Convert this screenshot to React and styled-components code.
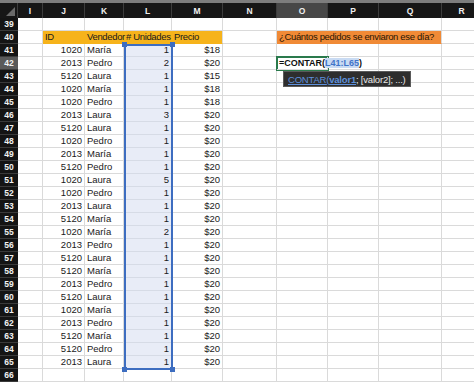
import React from "react";
import styled, { createGlobalStyle } from "styled-components";

const GlobalStyle = createGlobalStyle`
  html, body {
    margin: 0;
    padding: 0;
    background: #ffffff;
  }
`;

const COLS = [
  { key: "I", w: 25 },
  { key: "J", w: 42 },
  { key: "K", w: 39 },
  { key: "L", w: 48 },
  { key: "M", w: 51 },
  { key: "N", w: 54 },
  { key: "O", w: 51 },
  { key: "P", w: 51 },
  { key: "Q", w: 63 },
  { key: "R", w: 40 },
];

const DATA = [
  [1020, "María", 1, 18],
  [2013, "Pedro", 2, 20],
  [5120, "Laura", 1, 15],
  [1020, "María", 1, 18],
  [1020, "Pedro", 1, 18],
  [2013, "Laura", 3, 20],
  [5120, "Laura", 1, 20],
  [1020, "Pedro", 1, 20],
  [2013, "María", 1, 20],
  [5120, "Pedro", 1, 20],
  [1020, "Laura", 5, 20],
  [1020, "Pedro", 1, 20],
  [2013, "Laura", 1, 20],
  [5120, "María", 1, 20],
  [1020, "María", 2, 20],
  [2013, "Pedro", 1, 20],
  [5120, "Laura", 1, 20],
  [5120, "María", 1, 20],
  [2013, "Pedro", 1, 20],
  [5120, "Laura", 1, 20],
  [1020, "María", 1, 20],
  [2013, "Pedro", 1, 20],
  [5120, "María", 1, 20],
  [5120, "Pedro", 1, 20],
  [2013, "Laura", 1, 20],
];

const Sheet = styled.div`
  position: relative;
  width: 474px;
  height: 384px;
  overflow: hidden;
  background: #ffffff;
  font-family: "Liberation Sans", Arial, sans-serif;
`;

const HeaderRow = styled.div`
  display: flex;
  height: 18px;
  box-sizing: border-box;
  border-top: 3px solid #7d7d7d;
  background: #161616;
`;

const Corner = styled.div`
  position: relative;
  flex: none;
  width: 18px;
  box-sizing: border-box;
  border-right: 1px solid #3c3c3c;

  &::after {
    content: "";
    position: absolute;
    right: 2px;
    bottom: 2px;
    width: 0;
    height: 0;
    border-left: 9px solid transparent;
    border-bottom: 9px solid #6a6a6a;
  }
`;

const ColHead = styled.div`
  flex: none;
  width: ${(p) => p.$w}px;
  box-sizing: border-box;
  display: flex;
  align-items: center;
  justify-content: center;
  border-right: 1px solid #3c3c3c;
  background: ${(p) => (p.$active ? "#474747" : "transparent")};
  color: #f0f0f0;
  font-size: 8.5px;
  font-weight: bold;
`;

const Row = styled.div`
  display: flex;
  height: 13px;
`;

const RowHead = styled.div`
  flex: none;
  width: 18px;
  box-sizing: border-box;
  display: flex;
  align-items: center;
  justify-content: center;
  background: ${(p) => (p.$active ? "#5a5a5a" : "#141414")};
  border-bottom: 1px solid #3a3a3a;
  color: #f2f2f2;
  font-size: 8.5px;
  font-weight: bold;
`;

const Cell = styled.div`
  position: relative;
  flex: none;
  width: ${(p) => p.$w}px;
  box-sizing: border-box;
  padding: 0 2px;
  border-right: 1px solid ${(p) => (p.$noRight ? "transparent" : "#dadada")};
  border-bottom: 1px solid ${(p) => (p.$fill ? p.$fill : "#dadada")};
  background: ${(p) => p.$fill || "transparent"};
  color: ${(p) => p.$color || "#1a1a1a"};
  font-size: 9.5px;
  letter-spacing: ${(p) => (p.$tight ? "-0.35px" : "0")};
  line-height: 12px;
  text-align: ${(p) => (p.$right ? "right" : "left")};
  white-space: nowrap;
  z-index: ${(p) => (p.$front ? 2 : "auto")};
`;

const SelCell = styled(Cell)`
  background: #e8ecf7;
  border-bottom-color: #d6dbe6;
`;

const Formula = styled.span`
  font-size: 9px;
  font-weight: bold;
  color: #111111;
`;

const RefText = styled.span`
  color: #3f74c9;
  background: #c9dbf3;
`;

const ActiveBox = styled.div`
  position: absolute;
  left: 276px;
  top: 56px;
  width: 53px;
  height: 15px;
  box-sizing: border-box;
  border: 2px solid #2a7a4c;
  pointer-events: none;
  z-index: 1;
`;

const Selection = styled.div`
  position: absolute;
  left: 124px;
  top: 44px;
  width: 49px;
  height: 326px;
  box-sizing: border-box;
  border: 2px solid #3d6dc0;
  pointer-events: none;
  z-index: 3;
`;

const Handle = styled.span`
  position: absolute;
  width: 5px;
  height: 5px;
  background: #3d6dc0;
  ${(p) => (p.$top ? "top: -4px;" : "bottom: -4px;")}
  ${(p) => (p.$left ? "left: -4px;" : "right: -4px;")}
`;

const Tooltip = styled.div`
  position: absolute;
  left: 283px;
  top: 71px;
  height: 16px;
  box-sizing: border-box;
  padding: 0 4px;
  display: flex;
  align-items: center;
  background: #2e2e2e;
  border: 1px solid #5a5a5a;
  color: #e8e8e8;
  font-size: 9.5px;
  letter-spacing: -0.2px;
  white-space: nowrap;
  z-index: 4;
`;

const FnLink = styled.span`
  color: #5d90dc;
  text-decoration: underline;
  font-weight: ${(p) => (p.$bold ? "bold" : "normal")};
`;

const ORANGE_HEAD = "#f6b31b";
const ORANGE_Q = "#f08a36";

const dataRow = (r, i) => {
  const n = 41 + i;
  const [id, name, qty, price] = r;
  return (
    <Row key={n}>
      <RowHead $active={n === 42}>{n}</RowHead>
      <Cell $w={25} />
      <Cell $w={42} $right>{id}</Cell>
      <Cell $w={39}>{name}</Cell>
      <SelCell $w={48} $right>{qty}</SelCell>
      <Cell $w={51} $right>${price}</Cell>
      <Cell $w={54} />
      {n === 42 ? (
        <Cell $w={51} $front>
          <Formula>
            =CONTAR(<RefText>L41:L65</RefText>)
          </Formula>
        </Cell>
      ) : (
        <Cell $w={51} />
      )}
      <Cell $w={51} />
      <Cell $w={63} />
      <Cell $w={40} />
    </Row>
  );
};

const blankRow = (n) => (
  <Row key={n}>
    <RowHead>{n}</RowHead>
    {COLS.map((c) => (
      <Cell key={c.key} $w={c.w} />
    ))}
  </Row>
);

export default function App() {
  return (
    <>
      <GlobalStyle />
      <Sheet>
        <HeaderRow>
          <Corner />
          {COLS.map((c) => (
            <ColHead key={c.key} $w={c.w} $active={c.key === "O"}>
              {c.key}
            </ColHead>
          ))}
        </HeaderRow>

        {blankRow(39)}

        <Row>
          <RowHead>40</RowHead>
          <Cell $w={25} />
          <Cell $w={42} $fill={ORANGE_HEAD} $noRight $tight>ID</Cell>
          <Cell $w={39} $fill={ORANGE_HEAD} $noRight $tight $front>
            Vendedor
          </Cell>
          <Cell $w={48} $fill={ORANGE_HEAD} $noRight $tight>
            # Unidades
          </Cell>
          <Cell $w={51} $fill={ORANGE_HEAD} $tight>Precio</Cell>
          <Cell $w={54} />
          <Cell $w={165} $fill={ORANGE_Q} $color="#2a1604" $tight>
            ¿Cuántos pedidos se enviaron ese día?
          </Cell>
          <Cell $w={40} />
        </Row>

        {DATA.map(dataRow)}
        {blankRow(66)}

        <ActiveBox />
        <Selection>
          <Handle $top $left />
          <Handle $top />
          <Handle $left />
          <Handle />
        </Selection>
        <Tooltip>
          <FnLink>CONTAR</FnLink>
          <FnLink>(</FnLink>
          <FnLink $bold>valor1</FnLink>
          <span>; [valor2]; ...)</span>
        </Tooltip>
      </Sheet>
    </>
  );
}
